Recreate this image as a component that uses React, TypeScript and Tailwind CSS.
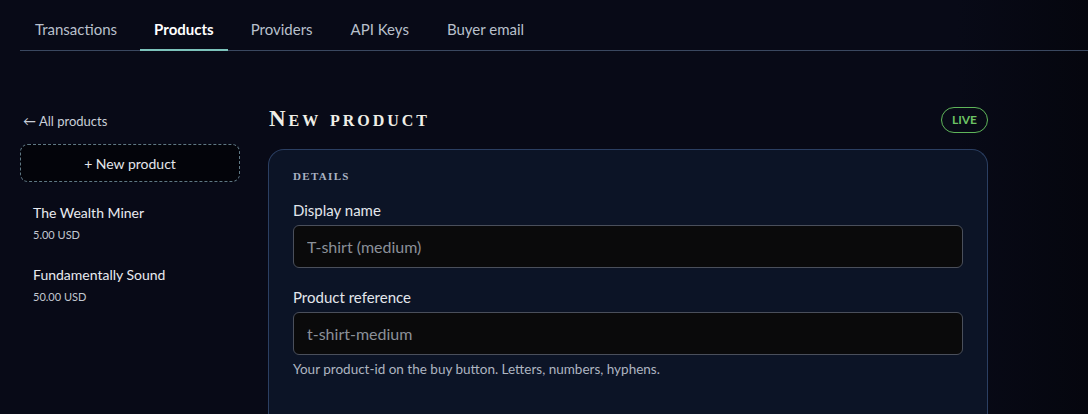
const tabs = ["Transactions", "Products", "Providers", "API Keys", "Buyer email"];

const products = [
  { name: "The Wealth Miner", price: "5.00 USD" },
  { name: "Fundamentally Sound", price: "50.00 USD" },
];

const Field = ({
  label,
  placeholder,
  hint,
}: {
  label: string;
  placeholder: string;
  hint?: string;
}) => (
  <div className="flex flex-col">
    <label className="text-[15px] leading-[20px] text-[#e3e6ec]">{label}</label>
    <input
      placeholder={placeholder}
      className="mt-[5px] h-[43px] w-full rounded-[6px] border border-[#4a4f5b] bg-[#0a0a0b] px-[13px] text-[16px] text-[#e3e6ec] placeholder:text-[#8b9099] outline-none"
    />
    {hint && <p className="mt-[6px] text-[13.5px] leading-[16px] text-[#aeb5c1]">{hint}</p>}
  </div>
);

export default function App() {
  return (
    <div
      className="min-h-[414px] w-full overflow-hidden bg-[linear-gradient(90deg,#080a17_0%,#080a17_88%,#05060e_100%)] text-white"
      style={{ fontFamily: "Lato, 'Noto Sans', sans-serif" }}
    >
      <div className="pl-5">
        <nav className="flex gap-2 border-b border-[#3a4860]">
          {tabs.map((t) => (
            <div
              key={t}
              className={
                t === "Products"
                  ? "-mb-px border-b-2 border-[#7cc3bb] px-[14px] pt-[18px] pb-[8px] text-[15px] leading-[22px] font-bold text-white"
                  : "px-[15px] pt-[18px] pb-[10px] text-[15px] leading-[22px] text-[#b9c0cc]"
              }
            >
              {t}
            </div>
          ))}
        </nav>
      </div>

      <div className="flex gap-7 pl-5 pt-[57px]">
        <aside className="flex w-[220px] shrink-0 flex-col">
          <a className="mt-[5px] pl-[3px] text-[13px] leading-[16px] text-[#c9cfd8]">← All products</a>
          <button className="mt-[15px] h-[38px] w-full rounded-[8px] border border-dashed border-[#5f7884] bg-[#03040a] text-[14px] text-[#e3e6ec]">
            + New product
          </button>
          <ul className="mt-[22px] flex flex-col gap-[24px] pl-[13px]">
            {products.map((p) => (
              <li key={p.name} className="flex flex-col">
                <span className="text-[14px] leading-[18px] text-[#e8ebf0]">{p.name}</span>
                <span className="mt-[6px] text-[11px] leading-[14px] text-[#c2c8d1]">{p.price}</span>
              </li>
            ))}
          </ul>
        </aside>

        <main className="flex w-[720px] flex-col">
          <div className="flex h-[26px] items-center justify-between">
            <h1
              className="-mt-[4px] pl-px text-[23px] leading-[26px] font-semibold tracking-[0.13em] text-[#efeee6]"
              style={{ fontFamily: "'Liberation Serif', serif", fontVariant: "small-caps" }}
            >
              New product
            </h1>
            <span className="-mt-[2px] rounded-full border border-[#5fb55a] px-[10px] py-[4px] text-[12px] leading-[16px] font-bold text-[#6cc164]">
              LIVE
            </span>
          </div>

          <section className="mt-[15px] rounded-t-[16px] border border-b-0 border-[#2b3f62] bg-[#0c1426] px-6 pt-[19px] pb-10">
            <h2
              className="text-[11px] leading-[14px] font-bold tracking-[0.12em] text-[#aab2c2]"
              style={{ fontFamily: "'Liberation Serif', serif" }}
            >
              DETAILS
            </h2>
            <div className="mt-[17px] flex flex-col gap-[19px]">
              <Field label="Display name" placeholder="T-shirt (medium)" />
              <Field
                label="Product reference"
                placeholder="t-shirt-medium"
                hint="Your product-id on the buy button. Letters, numbers, hyphens."
              />
            </div>
          </section>
        </main>
      </div>
    </div>
  );
}
